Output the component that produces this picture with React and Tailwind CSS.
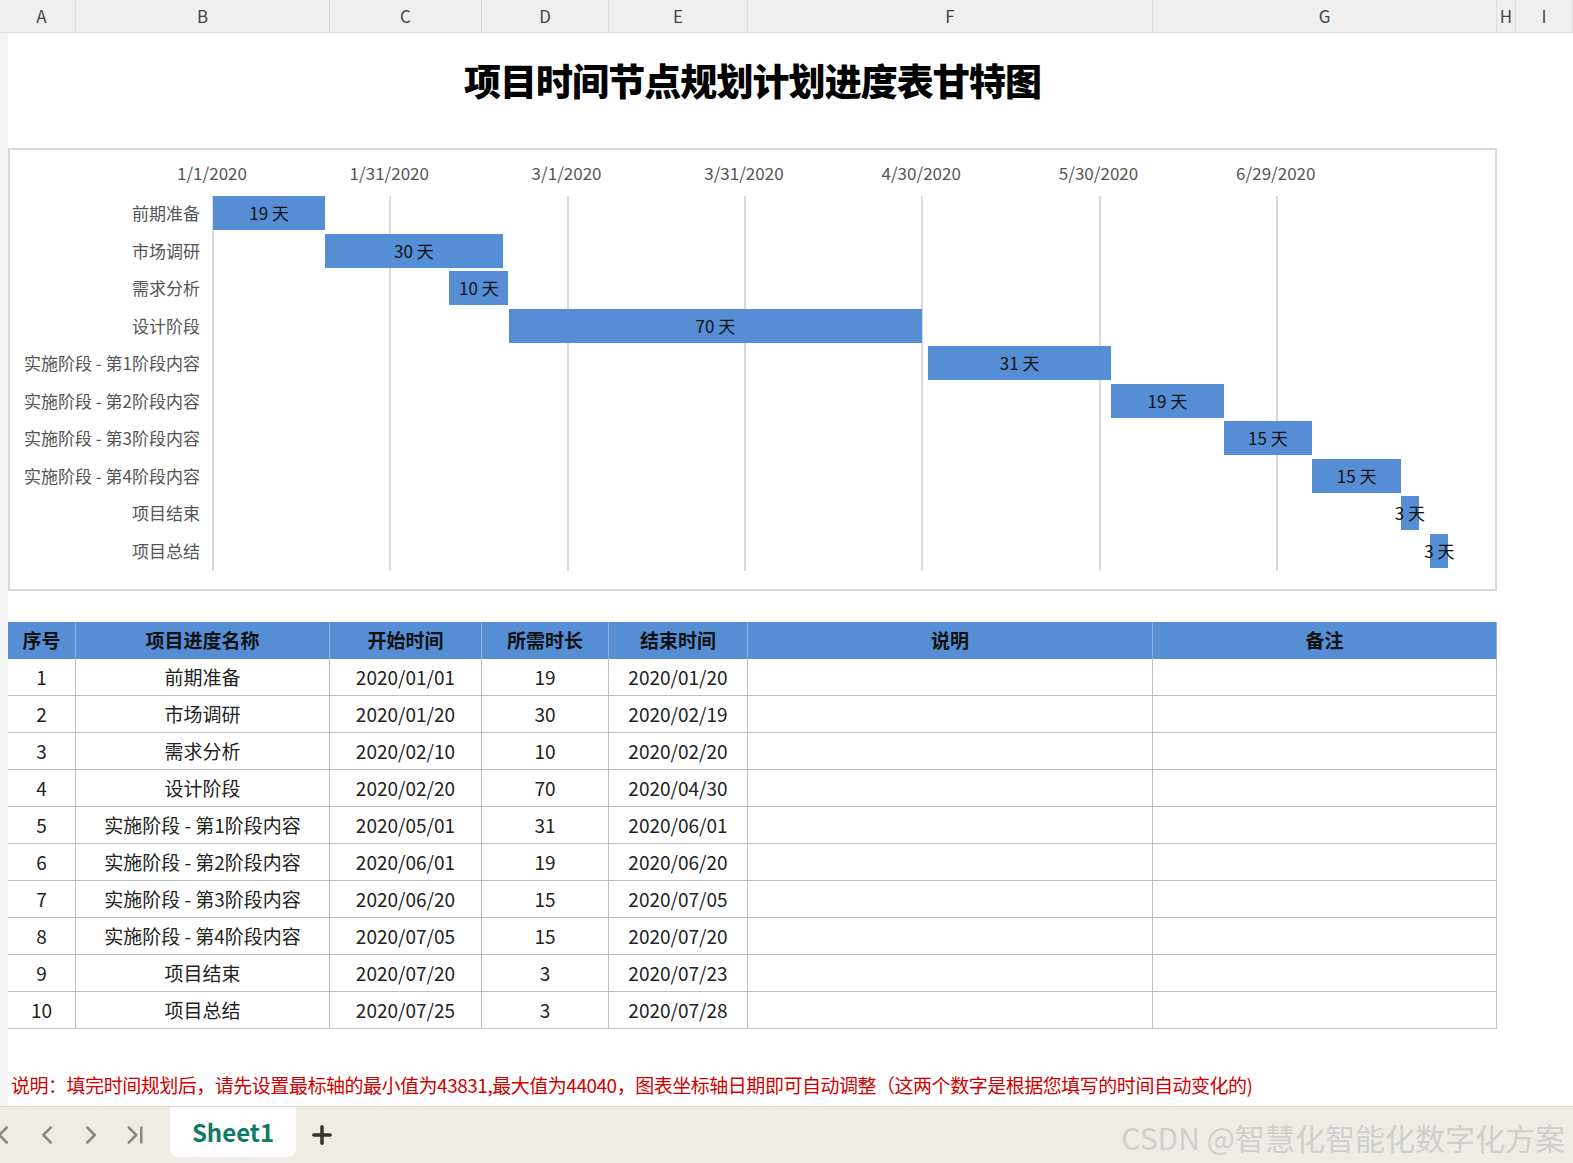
import React from 'react';
import { ChevronLeft, ChevronRight, ChevronLast, Plus } from 'lucide-react';

const font = { fontFamily: '"Noto Sans CJK SC", "Noto Sans", sans-serif' };
const cols = [
  { l: 'A', w: 68 }, { l: 'B', w: 254 }, { l: 'C', w: 152 }, { l: 'D', w: 127 },
  { l: 'E', w: 139 }, { l: 'F', w: 405 }, { l: 'G', w: 344 }, { l: 'H', w: 19 }, { l: 'I', w: 57 },
];
const tasks = [
  ['前期准备', '2020/01/01', 19, '2020/01/20', 0],
  ['市场调研', '2020/01/20', 30, '2020/02/19', 19],
  ['需求分析', '2020/02/10', 10, '2020/02/20', 40],
  ['设计阶段', '2020/02/20', 70, '2020/04/30', 50],
  ['实施阶段 - 第1阶段内容', '2020/05/01', 31, '2020/06/01', 121],
  ['实施阶段 - 第2阶段内容', '2020/06/01', 19, '2020/06/20', 152],
  ['实施阶段 - 第3阶段内容', '2020/06/20', 15, '2020/07/05', 171],
  ['实施阶段 - 第4阶段内容', '2020/07/05', 15, '2020/07/20', 186],
  ['项目结束', '2020/07/20', 3, '2020/07/23', 201],
  ['项目总结', '2020/07/25', 3, '2020/07/28', 206],
];
const ticks = ['1/1/2020', '1/31/2020', '3/1/2020', '3/31/2020', '4/30/2020', '5/30/2020', '6/29/2020'];
const DAY = 5.91;
const widths = [68, 254, 152, 127, 139, 405, 344];

export default function App() {
  return (
    <div className="w-[1573px] h-[1163px] bg-white overflow-hidden flex flex-col text-[#222]" style={font}>
      <div className="flex h-[33px] shrink-0 bg-[#efefef] border-b border-[#dcdcdc] text-[17px] text-[#444] pl-[8px]">
        {cols.map(c => (
          <div key={c.l} className="shrink-0 flex items-center justify-center border-r border-[#dcdcdc]" style={{ width: c.w }}>{c.l}</div>
        ))}
      </div>
      <div className="flex flex-1">
        <div className="w-[8px] shrink-0 bg-[#f3f3f3]" />
        <div className="flex-1 flex flex-col">
          <div className="h-[115px] flex items-center justify-center w-[1489px]">
            <h1 className="text-[37px] font-black text-black tracking-tight mt-[-20px]">项目时间节点规划计划进度表甘特图</h1>
          </div>
          <div className="w-[1489px] h-[443px] border-2 border-[#d9d9d9] relative">
            {ticks.map((t, i) => (
              <div key={t}>
                <div className="absolute top-[10px] text-[17px] text-[#555] -translate-x-1/2" style={{ left: 202 + i * 177.3 }}>{t}</div>
                <div className="absolute top-[46px] h-[375px] w-[2px] bg-[#d9d9d9]" style={{ left: 202 + i * 177.3 }} />
              </div>
            ))}
            {tasks.map((t, i) => (
              <div key={t[0]}>
                <div className="absolute right-[1295px] text-[17px] text-[#555] whitespace-nowrap leading-[34px]" style={{ top: 46 + i * 37.5 }}>{t[0]}</div>
                <div className="absolute h-[34px] bg-[#558ed5] flex items-center justify-center text-[17px] text-[#111] whitespace-nowrap"
                  style={{ top: 46 + i * 37.5, left: 203 + t[4] * DAY, width: t[2] * DAY }}>{t[2]} 天</div>
              </div>
            ))}
          </div>
          <div className="h-[31px]" />
          <div className="w-[1489px] text-[19px]">
            <div className="flex h-[37px] bg-[#558ed5] font-bold text-[#111]">
              {['序号', '项目进度名称', '开始时间', '所需时长', '结束时间', '说明', '备注'].map((h, i) => (
                <div key={h} className="shrink-0 flex items-center justify-center border-r border-[#8eb1e0]" style={{ width: widths[i] }}>{h}</div>
              ))}
            </div>
            {tasks.map((t, r) => (
              <div key={t[0]} className="flex h-[37px] border-b border-[#bfbfbf]">
                {[r + 1, t[0], t[1], t[2], t[3], '', ''].map((v, i) => (
                  <div key={i} className="shrink-0 flex items-center justify-center border-r border-[#bfbfbf]" style={{ width: widths[i] }}>{v}</div>
                ))}
              </div>
            ))}
          </div>
          <div className="mt-[42px] ml-[3px] text-[19px] text-[#d00000] whitespace-nowrap tracking-tight">说明：填完时间规划后，请先设置最标轴的最小值为43831,最大值为44040，图表坐标轴日期即可自动调整（这两个数字是根据您填写的时间自动变化的)</div>
        </div>
      </div>
      <div className="h-[57px] shrink-0 bg-[#efece6] border-t border-[#dcd8d0] flex items-center relative">
        <div className="flex items-center gap-[14px] text-[#888] ml-[-12px]">
          <ChevronLeft size={30} strokeWidth={2} />
          <ChevronLeft size={30} strokeWidth={2} />
          <ChevronRight size={30} strokeWidth={2} />
          <ChevronLast size={30} strokeWidth={2} />
        </div>
        <div className="ml-[20px] h-[50px] w-[126px] bg-white rounded-b-lg self-start flex items-center justify-center text-[24px] font-bold text-[#0f7a66]">Sheet1</div>
        <Plus size={28} strokeWidth={3} className="ml-[12px] text-[#333]" />
        <div className="absolute right-[8px] top-[8px] text-[30px] text-[#cfcfcf]">CSDN @智慧化智能化数字化方案</div>
      </div>
    </div>
  );
}
